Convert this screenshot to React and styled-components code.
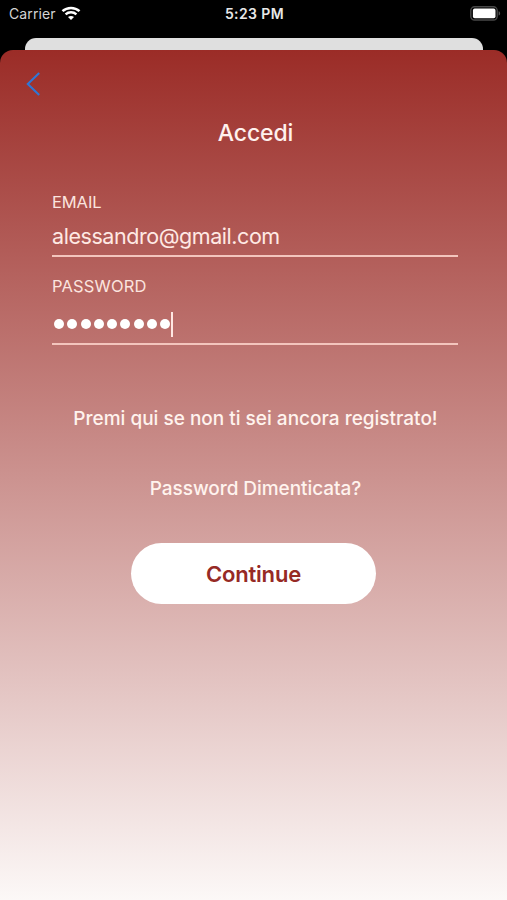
import React from 'react';
import styled, { createGlobalStyle } from 'styled-components';

const GlobalStyle = createGlobalStyle`
  * {
    box-sizing: border-box;
  }
  body {
    margin: 0;
    background: #000;
    font-family: Inter, 'Liberation Sans', sans-serif;
  }
`;

const PASSWORD_LENGTH = 9;

const App = () => {
  return (
    <Screen>
      <GlobalStyle />
      <StatusBar>
        <Carrier>
          <StatusText $spacing="0.12px" $color="#d4d4d4">Carrier</StatusText>
          <WifiIcon />
        </Carrier>
        <StatusText $weight={600} $spacing="0.4px">5:23 PM</StatusText>
        <BatterySlot>
          <BatteryIcon />
        </BatterySlot>
      </StatusBar>
      <PreviousSheet />
      <Sheet>
        <BackButton aria-label="Indietro">
          <svg width="16" height="26" viewBox="0 0 16 26" fill="none">
            <path d="M14.2 2L2.8 13L14.2 24" stroke="#2f77d6" strokeWidth="2.1" />
          </svg>
        </BackButton>
        <Title>Accedi</Title>
        <Form>
          <Field $height="66px">
            <Label>EMAIL</Label>
            <Value>alessandro@gmail.com</Value>
          </Field>
          <Field $height="70px">
            <Label $spacing="0.15px">PASSWORD</Label>
            <Dots aria-label="Password">
              {Array.from({ length: PASSWORD_LENGTH }, (_, i) => (
                <Dot key={i} />
              ))}
              <Caret />
            </Dots>
          </Field>
        </Form>
        <Links>
          <TextLink>Premi qui se non ti sei ancora registrato!</TextLink>
          <TextLink $spacing="-0.06px">Password Dimenticata?</TextLink>
        </Links>
        <ContinueButton>Continue</ContinueButton>
      </Sheet>
    </Screen>
  );
};

export default App;

const WifiIcon = () => (
  <svg width="20" height="15" viewBox="0 0 20 15" fill="none">
    <path d="M1.5 5.2C6.2 0.8 13.8 0.8 18.5 5.2" stroke="#fff" strokeWidth="2.5" />
    <path d="M4.6 8.4C7.6 5.6 12.4 5.6 15.4 8.4" stroke="#fff" strokeWidth="2.4" />
    <path d="M10 14L7 11C8.7 9.5 11.3 9.5 13 11Z" fill="#fff" />
  </svg>
);

const BatteryIcon = () => (
  <svg width="31" height="15" viewBox="0 0 31 15" fill="none">
    <rect x="0.8" y="0.8" width="26.4" height="13.2" rx="3.8" stroke="#484848" strokeWidth="1.4" />
    <rect x="2.9" y="2.6" width="22.6" height="9.6" rx="1.8" fill="#fff" />
    <path d="M28.6 5.2C30.6 5.8 30.6 9 28.6 9.6Z" fill="#555" />
  </svg>
);

const Screen = styled.div`
  display: flex;
  flex-direction: column;
  width: 507px;
  height: 900px;
  background: #000;
  overflow: hidden;
`;

const StatusBar = styled.header`
  display: grid;
  grid-template-columns: 1fr auto 1fr;
  align-items: center;
  height: 38px;
  padding: 0 6px 11px 8px;
`;

const Carrier = styled.div`
  display: flex;
  align-items: center;
  gap: 5px;
  padding-left: 1px;
`;

const StatusText = styled.span`
  color: ${({ $color }) => $color || '#e8e8e8'};
  font-size: 14px;
  line-height: 20px;
  font-weight: ${({ $weight }) => $weight || 400};
  letter-spacing: ${({ $spacing }) => $spacing || 'normal'};
`;

const BatterySlot = styled.div`
  display: flex;
  justify-content: flex-end;
`;

const PreviousSheet = styled.div`
  flex: none;
  height: 12px;
  margin: 0 24px 0 25px;
  border-radius: 11px 11px 0 0;
  background: #dfdfdf;
`;

const Sheet = styled.main`
  flex: 1;
  display: flex;
  flex-direction: column;
  align-items: center;
  border-radius: 13px 13px 0 0;
  background: linear-gradient(#9b2c27, #fcf8f7);
`;

const BackButton = styled.button`
  display: flex;
  align-self: flex-start;
  margin: 21px 0 0 25px;
  padding: 0;
  border: 0;
  background: none;
`;

const Title = styled.h1`
  margin: 21px 0 0 4px;
  color: #fff1ee;
  font-size: 23px;
  font-weight: 500;
  line-height: 30px;
  letter-spacing: -0.1px;
`;

const Form = styled.form`
  display: flex;
  flex-direction: column;
  gap: 18px;
  width: 406px;
  margin: 43px 0 0 3px;
`;

const Field = styled.div`
  height: ${({ $height }) => $height};
  border-bottom: 2px solid #f3c5bd;
`;

const Label = styled.div`
  padding-top: 1px;
  color: #fbe4df;
  font-size: 16.5px;
  line-height: 20px;
  letter-spacing: ${({ $spacing }) => $spacing || '-0.1px'};
`;

const Value = styled.div`
  margin-top: 11px;
  color: #ffe9e4;
  font-size: 21.5px;
  line-height: 26px;
  letter-spacing: -0.44px;
`;

const Dots = styled.div`
  display: flex;
  align-items: center;
  gap: 3.3px;
  height: 26px;
  margin-top: 15px;
  padding-left: 2px;
`;

const Dot = styled.span`
  width: 10px;
  height: 10px;
  border-radius: 50%;
  background: #fff;
`;

const Caret = styled.span`
  width: 2px;
  height: 25px;
  margin-left: -3px;
  background: #ffe7e2;
`;

const Links = styled.div`
  display: flex;
  flex-direction: column;
  align-items: center;
  gap: 42px;
  margin: 60px 0 0 4px;
`;

const TextLink = styled.a`
  color: #fff3ee;
  font-size: 19px;
  font-weight: 500;
  line-height: 28px;
  letter-spacing: ${({ $spacing }) => $spacing || 'normal'};
  white-space: nowrap;
`;

const ContinueButton = styled.button`
  width: 245px;
  height: 61px;
  margin-top: 40px;
  padding: 0;
  border: 0;
  border-radius: 31px;
  background: #fff;
  color: #962a25;
  font-family: inherit;
  font-size: 22px;
  font-weight: 600;
  letter-spacing: -0.2px;
`;
